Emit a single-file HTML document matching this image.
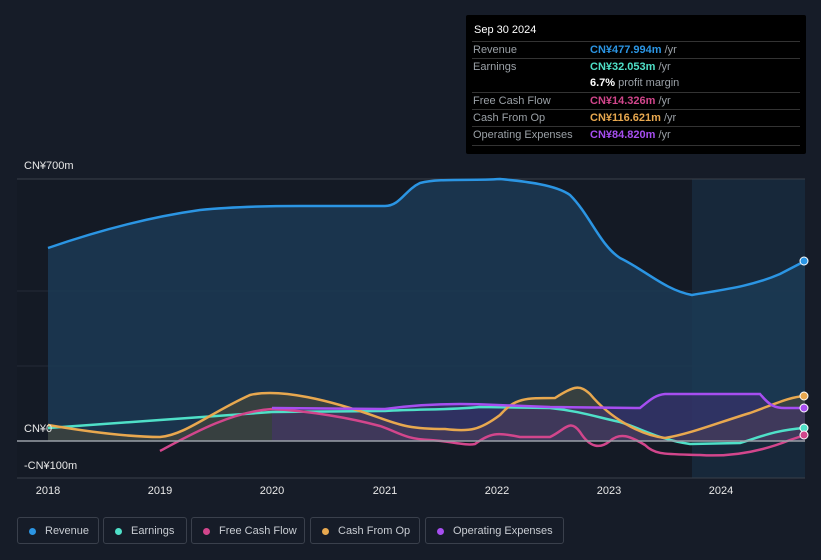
<!DOCTYPE html><html><head><style>
body{margin:0;width:821px;height:560px;background:#161c28;font-family:"Liberation Sans",sans-serif;overflow:hidden;position:relative}
.tt{position:absolute;left:466px;top:15px;width:340px;height:139px;background:#000;border-radius:2px}
.tt .h{position:absolute;left:8px;top:9px;color:#fff;font-size:11px}
.r{position:absolute;left:6px;width:328px;border-top:1px solid #333;font-size:11px;color:#9aa0a6;height:17px;line-height:17px}
.r span{position:absolute;left:1px}.r b{position:absolute;left:118px;font-weight:bold}.r i{font-style:normal;color:#9aa0a6;font-weight:normal}
.lg{position:absolute;top:517px;height:27px;border:1px solid #3a404c;border-radius:3px;color:#c8ccd2;font-size:11px;line-height:27px;box-sizing:border-box;padding-left:27px}
.lg:before{content:"";position:absolute;left:11px;top:10px;width:7px;height:7px;border-radius:50%;background:var(--c)}
.yl{position:absolute;left:24px;color:#e8e8e8;font-size:11px}
.xl{position:absolute;top:485px;color:#e8e8e8;font-size:11px;transform:translateX(-50%)}
</style></head><body>
<svg width="821" height="560" style="position:absolute;left:0;top:0">
<rect x="17" y="179" width="788" height="299" fill="#141a25"/>
<rect x="692" y="179" width="113" height="299" fill="#17283a"/>
<line x1="17" y1="179" x2="805" y2="179" stroke="#3a404a"/>
<line x1="17" y1="291" x2="805" y2="291" stroke="#232a36"/>
<line x1="17" y1="366" x2="805" y2="366" stroke="#232a36"/>
<line x1="17" y1="478" x2="805" y2="478" stroke="#3a404a"/>
<path d="M48,248 C100,230 150,217 200,210 C230,207 260,206 300,206 L385,206 C400,206 405,190 420,183 C440,178 470,181 500,179 C520,181 555,184 570,195 C590,215 600,245 620,258 C645,270 665,290 692,295 C720,290 750,287 780,274 L805,261 L805,441 L48,441Z" fill="#1b3a55" opacity="0.85"/>
<path d="M48,248 C100,230 150,217 200,210 C230,207 260,206 300,206 L385,206 C400,206 405,190 420,183 C440,178 470,181 500,179 C520,181 555,184 570,195 C590,215 600,245 620,258 C645,270 665,290 692,295 C720,290 750,287 780,274 L805,261" fill="none" stroke="#2b95e3" stroke-width="2.5"/>
<path d="M48,425 C90,432 130,437 160,437 C185,435 210,413 250,395 C280,388 330,400 380,418 C400,425 410,429 445,429 C470,432 480,430 500,415 C515,398 525,398 555,398 C575,385 580,385 590,394 C610,418 640,435 665,438 C690,434 720,422 750,413 C780,402 790,397 805,396 L805,441 L48,441Z" fill="#5a5030" opacity="0.45"/>
<path d="M272,408 L385,409 C420,404 460,403 497,405 L550,407 L640,408 C650,400 655,395 665,394 L760,394 C770,406 775,408 785,408 L805,408 L805,441 L272,441Z" fill="#4a2f7a" opacity="0.45"/>
<path d="M48,428 L160,420 L272,412 L385,411 C420,409 450,410 480,407 L550,408 C580,411 600,418 620,422 C640,428 660,440 690,444 L740,443 C760,437 775,430 805,428" fill="none" stroke="#4fe0c8" stroke-width="2.5"/>
<path d="M160,451 C190,435 230,412 272,409 C310,411 350,418 380,426 C400,433 405,439 430,440 C450,441 465,446 475,444 C490,433 497,432 520,437 L550,437 C565,430 570,418 580,432 C590,448 600,449 610,441 C620,432 630,436 645,445 C655,455 665,454 700,455 C730,457 760,452 790,440 L805,435" fill="none" stroke="#d2468c" stroke-width="2.5"/>
<path d="M48,425 C90,432 130,437 160,437 C185,435 210,413 250,395 C280,388 330,400 380,418 C400,425 410,429 445,429 C470,432 480,430 500,415 C515,398 525,398 555,398 C575,385 580,385 590,394 C610,418 640,435 665,438 C690,434 720,422 750,413 C780,402 790,397 805,396" fill="none" stroke="#e8a84f" stroke-width="2.5"/>
<path d="M272,408 L385,409 C420,404 460,403 497,405 L550,407 L640,408 C650,400 655,395 665,394 L760,394 C770,406 775,408 785,408 L805,408" fill="none" stroke="#a64ef0" stroke-width="2.5"/>
<line x1="17" y1="441" x2="805" y2="441" stroke="#9aa0a8" stroke-width="1.5"/>
<circle cx="804" cy="261" r="4" fill="#2b95e3" stroke="#fff" stroke-width="1"/>
<circle cx="804" cy="396" r="4" fill="#e8a84f" stroke="#fff" stroke-width="1"/>
<circle cx="804" cy="408" r="4" fill="#a64ef0" stroke="#fff" stroke-width="1"/>
<circle cx="804" cy="428" r="4" fill="#4fe0c8" stroke="#fff" stroke-width="1"/>
<circle cx="804" cy="435" r="4" fill="#d2468c" stroke="#fff" stroke-width="1"/>
</svg>
<div class="yl" style="top:160px">CN¥700m</div>
<div class="yl" style="top:423px">CN¥0</div>
<div class="yl" style="top:460px">-CN¥100m</div>
<div class="xl" style="left:48px">2018</div><div class="xl" style="left:160px">2019</div><div class="xl" style="left:272px">2020</div><div class="xl" style="left:385px">2021</div><div class="xl" style="left:497px">2022</div><div class="xl" style="left:609px">2023</div><div class="xl" style="left:721px">2024</div>
<div class="tt"><div class="h">Sep 30 2024</div>
<div class="r" style="top:26px"><span>Revenue</span><b style="color:#2b95e3">CN¥477.994m <i>/yr</i></b></div>
<div class="r" style="top:43px"><span>Earnings</span><b style="color:#4fe0c8">CN¥32.053m <i>/yr</i></b></div>
<div class="r" style="top:60px;border-top:none"><b style="color:#fff">6.7% <i>profit margin</i></b></div>
<div class="r" style="top:77px"><span>Free Cash Flow</span><b style="color:#d2468c">CN¥14.326m <i>/yr</i></b></div>
<div class="r" style="top:94px"><span>Cash From Op</span><b style="color:#e8a84f">CN¥116.621m <i>/yr</i></b></div>
<div class="r" style="top:111px"><span>Operating Expenses</span><b style="color:#a64ef0">CN¥84.820m <i>/yr</i></b></div>
<div class="r" style="top:130px;height:0"></div>
</div>
<div class="lg" style="left:17px;width:82px;--c:#2b95e3">Revenue</div>
<div class="lg" style="left:103px;width:84px;--c:#4fe0c8">Earnings</div>
<div class="lg" style="left:191px;width:114px;--c:#d2468c">Free Cash Flow</div>
<div class="lg" style="left:310px;width:110px;--c:#e8a84f">Cash From Op</div>
<div class="lg" style="left:425px;width:139px;--c:#a64ef0">Operating Expenses</div>
</body></html>
